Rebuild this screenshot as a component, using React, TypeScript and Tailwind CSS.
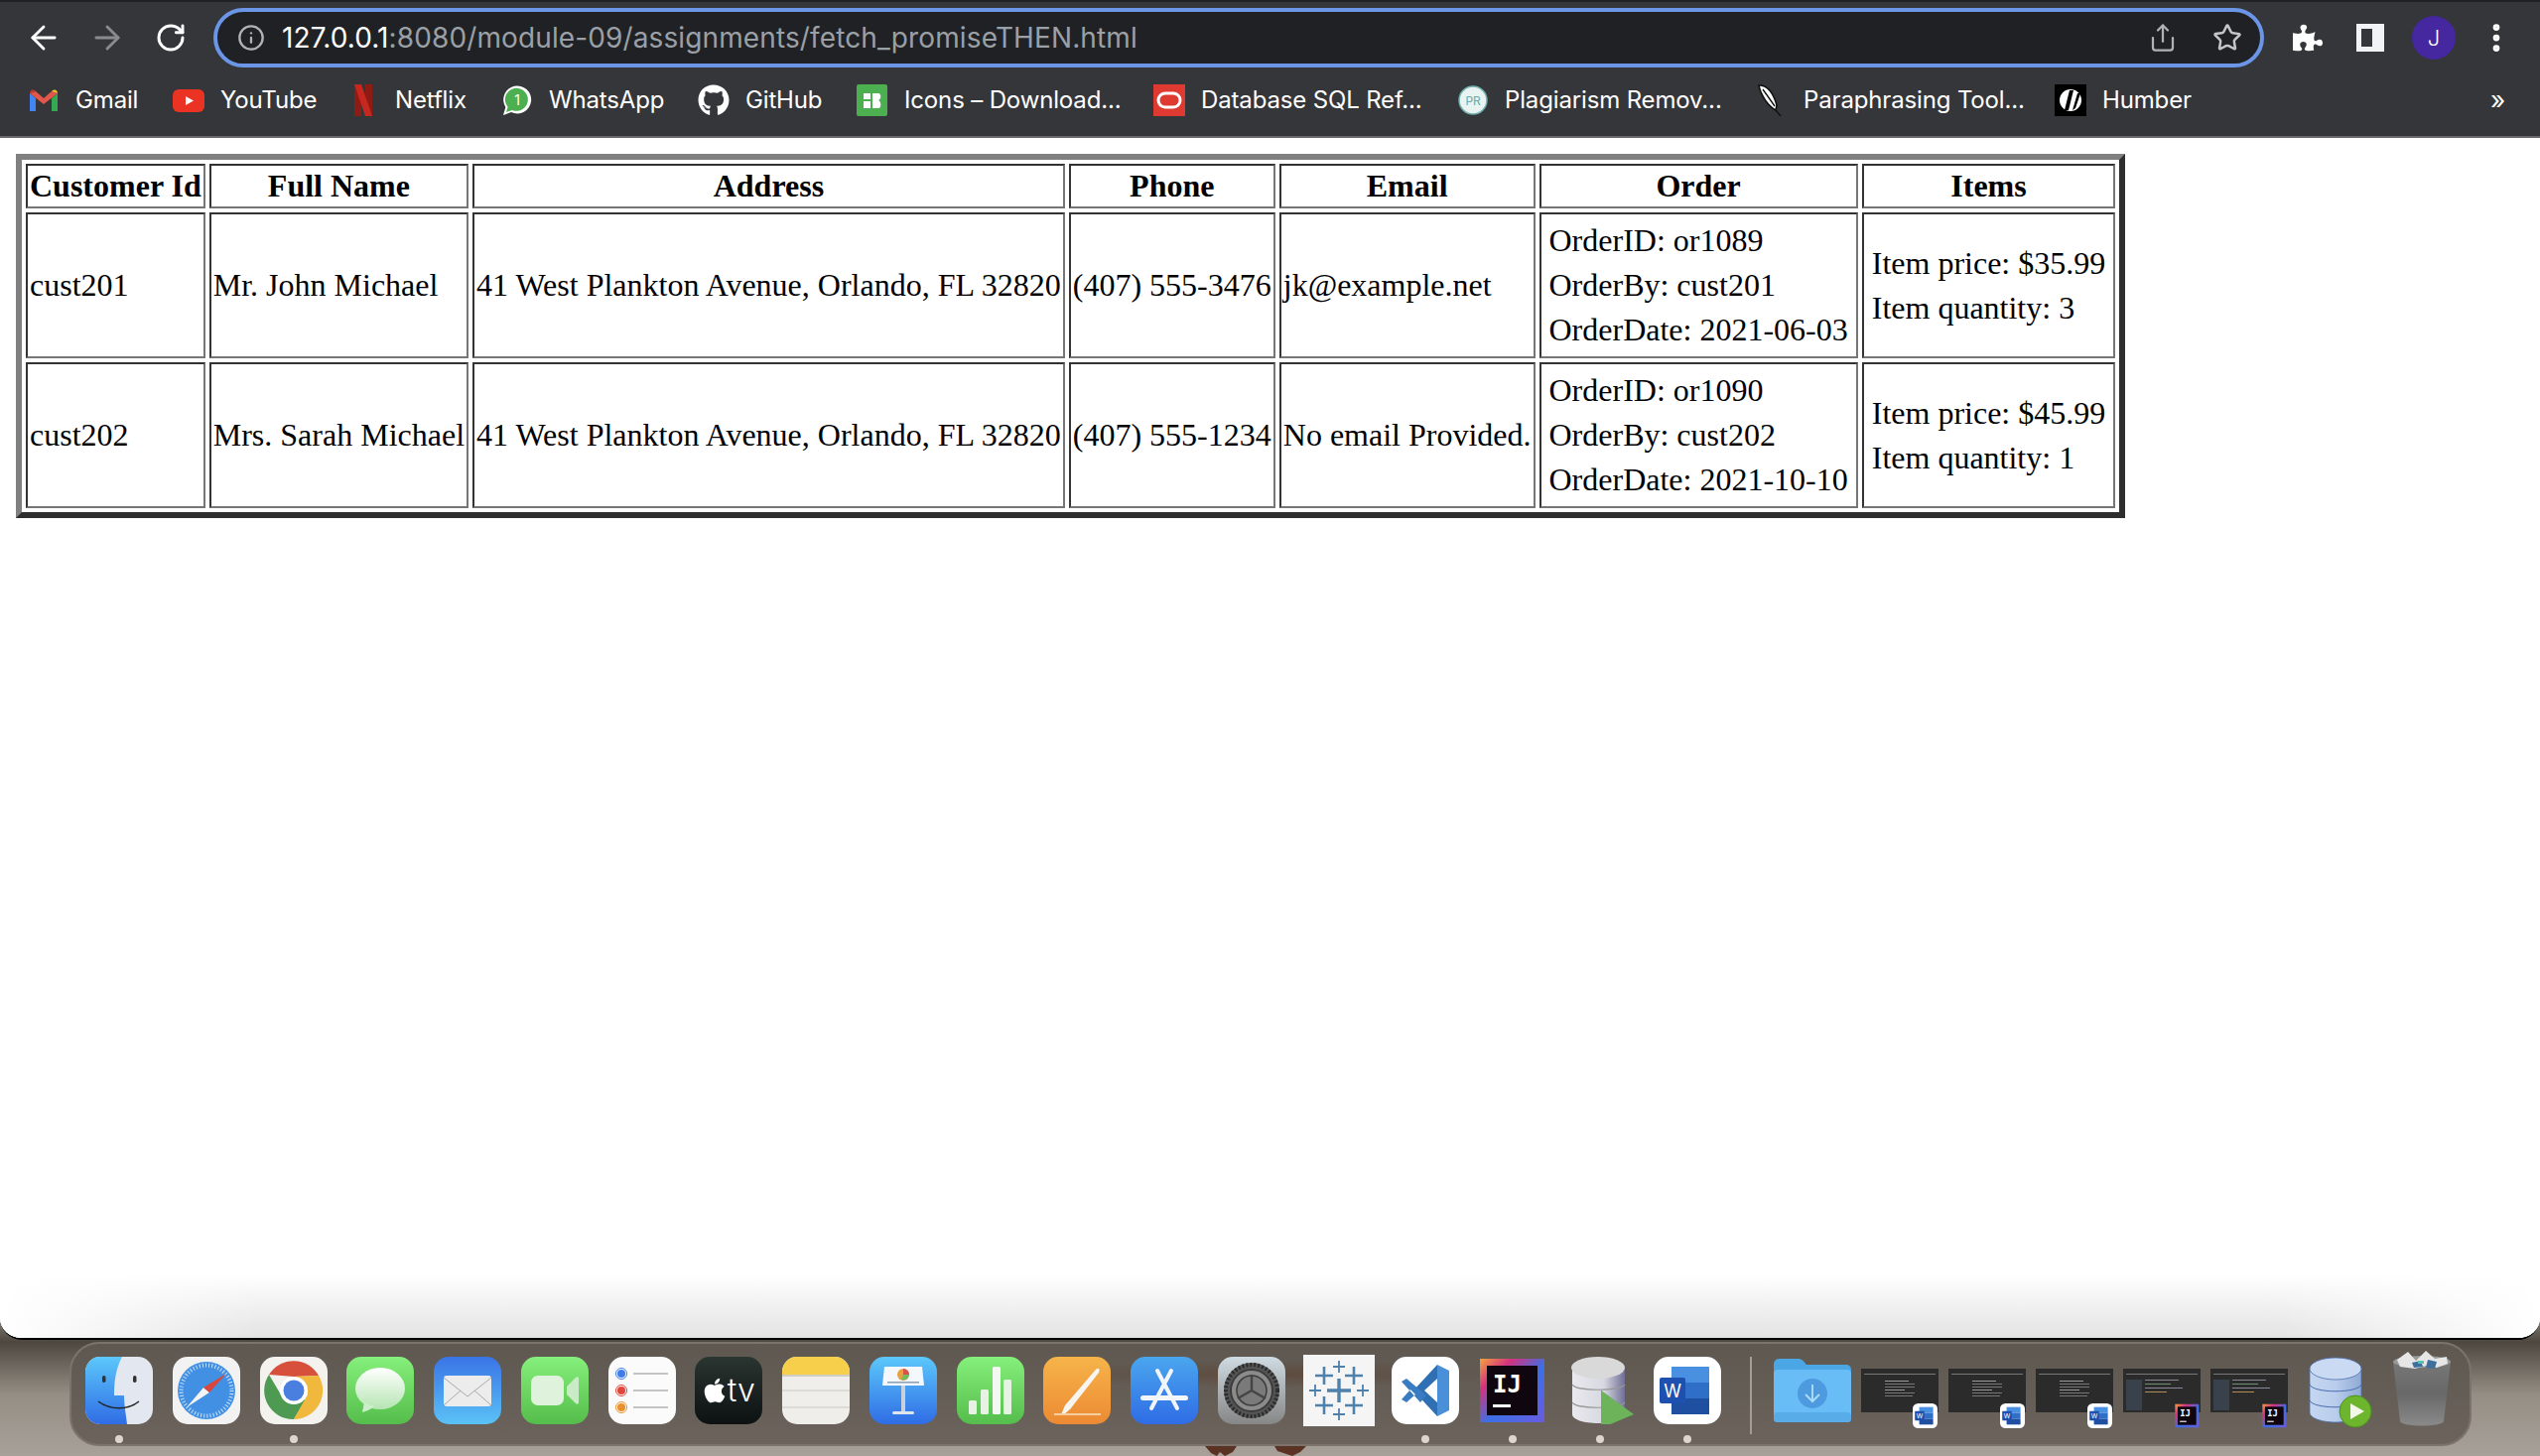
import { ArrowLeft, ArrowRight, Info, MoreVertical, RotateCw, Share, Star } from "lucide-react"
import { FaApple, FaGithub, FaPuzzlePiece } from "react-icons/fa"
import type { ReactNode } from "react"

const rows = [
  {
    id: "cust201",
    name: "Mr. John Michael",
    phone: "(407) 555-3476",
    email: "jk@example.net",
    order: ["OrderID: or1089", "OrderBy: cust201", "OrderDate: 2021-06-03"],
    items: ["Item price: $35.99", "Item quantity: 3"],
  },
  {
    id: "cust202",
    name: "Mrs. Sarah Michael",
    phone: "(407) 555-1234",
    email: "No email Provided.",
    order: ["OrderID: or1090", "OrderBy: cust202", "OrderDate: 2021-10-10"],
    items: ["Item price: $45.99", "Item quantity: 1"],
  },
]

const headers = ["Customer Id", "Full Name", "Address", "Phone", "Email", "Order", "Items"]

const cellBorder =
  "border-2 border-solid border-t-[#333333] border-l-[#333333] border-b-[#767676] border-r-[#767676] p-[2px] whitespace-nowrap"

function Cell({ children }: { children: ReactNode }) {
  return <td className={cellBorder}>{children}</td>
}

function Nested({ lines }: { lines: string[] }) {
  return (
    <table className="border-separate border-spacing-[4px]">
      <tbody>
        {lines.map((l) => (
          <tr key={l}>
            <td className="p-[2px] whitespace-nowrap">{l}</td>
          </tr>
        ))}
      </tbody>
    </table>
  )
}

function Favicon({ children }: { children: ReactNode }) {
  return (
    <svg viewBox="0 0 32 32" className="h-8 w-8 shrink-0">
      {children}
    </svg>
  )
}

const bookmarks: { label: string; width: string; icon: ReactNode }[] = [
  {
    label: "Gmail",
    width: "w-[146px]",
    icon: (
      <Favicon>
        <path d="M2 9v18h6V14z" fill="#4285f4" />
        <path d="M24 14v13h6V9z" fill="#34a853" />
        <path d="M2 9l14 11L30 9l-6-2-8 7-8-7z" fill="#e2574c" />
        <path d="M24 7l6 2c0-3-3-5-6-2z" fill="#f6bc2c" />
        <path d="M8 7L2 9c0-3 3-5 6-2z" fill="#c5382c" />
      </Favicon>
    ),
  },
  {
    label: "YouTube",
    width: "w-[176px]",
    icon: (
      <Favicon>
        <rect x="0" y="5" width="32" height="23" rx="6" fill="#ea3323" />
        <path d="M13 12l8 4.5-8 4.5z" fill="#fff" />
      </Favicon>
    ),
  },
  {
    label: "Netflix",
    width: "w-[155px]",
    icon: (
      <Favicon>
        <path d="M7 0h7v32l-7 .5z" fill="#8f1b15" />
        <path d="M18 0h7v32h-7z" fill="#8f1b15" />
        <path d="M7 0h7l11 32h-7z" fill="#c6281f" />
      </Favicon>
    ),
  },
  {
    label: "WhatsApp",
    width: "w-[198px]",
    icon: (
      <Favicon>
        <path d="M2 31l2.4-8A14 14 0 1 1 10 28z" fill="#fff" />
        <path d="M5 28l1.6-5.2A11.5 11.5 0 1 1 11 26z" fill="#4caf50" />
        <text x="16" y="21" textAnchor="middle" fontSize="14" fill="#fff" fontFamily="Inter, sans-serif">1</text>
      </Favicon>
    ),
  },
  {
    label: "GitHub",
    width: "w-[160px]",
    icon: <FaGithub className="h-8 w-8 shrink-0 text-white" />,
  },
  {
    label: "Icons – Download...",
    width: "w-[299px]",
    icon: (
      <Favicon>
        <rect width="31" height="32" rx="2" fill="#4caf50" />
        <path d="M7 9h7v6H7zM7 17h7v7H7zM16 9h6c3 0 3 6 0 7 3 1 3 8 0 8h-6z" fill="#fff" />
      </Favicon>
    ),
  },
  {
    label: "Database SQL Ref...",
    width: "w-[306px]",
    icon: (
      <Favicon>
        <rect width="32" height="32" fill="#de3a32" />
        <rect x="5" y="9" width="22" height="14" rx="7" fill="none" stroke="#fff" strokeWidth="3" />
      </Favicon>
    ),
  },
  {
    label: "Plagiarism Remov...",
    width: "w-[301px]",
    icon: (
      <Favicon>
        <circle cx="16" cy="16" r="14" fill="#e8f3f2" stroke="#6fb0ac" strokeWidth="1.5" />
        <text x="16" y="21" textAnchor="middle" fontSize="12" fill="#6fa8a4" fontFamily="Inter, sans-serif">PR</text>
      </Favicon>
    ),
  },
  {
    label: "Paraphrasing Tool...",
    width: "w-[301px]",
    icon: (
      <Favicon>
        <path d="M3 1c9-1 15 9 18 20l-1 5C13 22 5 12 3 1z" fill="#fff" stroke="#111" strokeWidth="1.6" />
        <path d="M7 5l12 17M20 26l5 6" stroke="#111" strokeWidth="1.4" />
      </Favicon>
    ),
  },
  {
    label: "Humber",
    width: "w-[120px]",
    icon: (
      <Favicon>
        <rect width="32" height="32" fill="#000" />
        <circle cx="16" cy="16" r="11" fill="#fff" />
        <path d="M10 26L15 6h4l-5 20zM18 26l5-17h3l-5 15z" fill="#000" />
      </Favicon>
    ),
  },
]

function Tile({ children }: { children: ReactNode }) {
  return (
    <svg viewBox="0 0 68 68" className="h-[68px] w-[68px]">
      {children}
    </svg>
  )
}

function Finder() {
  return (
    <Tile>
      <defs>
        <linearGradient id="fb" x1="0" y1="0" x2="0" y2="1">
          <stop offset="0" stopColor="#5cc8fb" />
          <stop offset="1" stopColor="#2f6ce5" />
        </linearGradient>
        <clipPath id="fc">
          <rect width="68" height="68" rx="15" />
        </clipPath>
      </defs>
      <g clipPath="url(#fc)">
        <rect width="68" height="68" fill="#e3e8f0" />
        <path d="M0 0h37c-5 10-8 20-8 39h10c0 10 2 20 3 29H0z" fill="url(#fb)" />
      </g>
      <rect x="17" y="19" width="3.5" height="7" rx="1.7" fill="#333" />
      <rect x="48" y="19" width="3.5" height="7" rx="1.7" fill="#333" />
      <path d="M13 45c12 9 30 9 41 0" fill="none" stroke="#222" strokeWidth="1.4" />
    </Tile>
  )
}

function Safari() {
  return (
    <Tile>
      <rect width="68" height="68" rx="15" fill="#f2f2f2" />
      <circle cx="34" cy="34" r="29" fill="#4190e4" />
      <circle cx="34" cy="34" r="25.5" fill="none" stroke="#cfe2f7" strokeWidth="4" strokeDasharray="1 2.2" />
      <path d="M14 51l17-20 6 5z" fill="#f4f4f4" />
      <path d="M54 17L31 31l6 5z" fill="#d9473a" />
    </Tile>
  )
}

function Chrome() {
  return (
    <Tile>
      <rect width="68" height="68" rx="15" fill="#f4f2ee" />
      <path d="M9 18A29 29 0 0 1 59 19L34 20z" fill="#d6503c" />
      <path d="M9 18a29 29 0 0 0 25 45l12-20-24-3z" fill="#4f9a53" />
      <path d="M59 19a29 29 0 0 1-25 44l14-25-14-18z" fill="#f0b83c" />
      <circle cx="34" cy="34" r="14" fill="#fff" />
      <circle cx="34" cy="34" r="10.5" fill="#4a7fe0" />
    </Tile>
  )
}

function Messages() {
  return (
    <Tile>
      <defs>
        <linearGradient id="gr" x1="0" y1="0" x2="0" y2="1">
          <stop offset="0" stopColor="#86f07c" />
          <stop offset="1" stopColor="#55bd4b" />
        </linearGradient>
        <linearGradient id="bu" x1="0" y1="0" x2="0" y2="1">
          <stop offset="0" stopColor="#ffffff" />
          <stop offset="1" stopColor="#b5e5b2" />
        </linearGradient>
      </defs>
      <rect width="68" height="68" rx="15" fill="url(#gr)" />
      <ellipse cx="34" cy="32" rx="25" ry="21" fill="url(#bu)" />
      <path d="M18 46l-2 10c4-1 9-3 12-6z" fill="#cdeecb" />
    </Tile>
  )
}

function Mail() {
  return (
    <Tile>
      <defs>
        <linearGradient id="ml" x1="0" y1="0" x2="0" y2="1">
          <stop offset="0" stopColor="#3a74e6" />
          <stop offset="1" stopColor="#5ac2f6" />
        </linearGradient>
      </defs>
      <rect width="68" height="68" rx="15" fill="url(#ml)" />
      <rect x="10" y="19" width="48" height="31" rx="3" fill="#ececec" />
      <path d="M10 21l24 19 24-19M10 49l17-15M58 49L41 34" fill="none" stroke="#a9a9a9" strokeWidth="1" />
    </Tile>
  )
}

function FaceTime() {
  return (
    <Tile>
      <rect width="68" height="68" rx="15" fill="url(#gr)" />
      <rect x="10" y="19" width="33" height="30" rx="7" fill="#dff3dc" />
      <path d="M46 30l9-9c1-1 3-1 3 1v24c0 2-2 2-3 1l-9-9z" fill="#c9ebc5" />
    </Tile>
  )
}

function Reminders() {
  return (
    <Tile>
      <rect width="68" height="68" rx="15" fill="#fbfbfb" />
      {[
        ["17", "#3f7ce8"],
        ["34", "#e0463a"],
        ["51", "#e8912c"],
      ].map(([y, c]) => (
        <g key={y}>
          <circle cx="13" cy={y} r="5.5" fill="#fff" stroke={c} strokeWidth="1" />
          <circle cx="13" cy={y} r="4" fill={c} />
          <rect x="25" y={Number(y) - 1} width="35" height="2" fill="#c4c4c4" />
        </g>
      ))}
    </Tile>
  )
}

function AppleTv() {
  return (
    <div className="relative flex h-[68px] w-[68px] items-center justify-center gap-[1px] rounded-[15px] bg-gradient-to-b from-[#2a3531] to-[#0d1112] font-['Inter',sans-serif] text-white">
      <FaApple className="h-[28px] w-[24px]" />
      <span className="text-[32px] font-light leading-none">tv</span>
    </div>
  )
}

function Notes() {
  return (
    <Tile>
      <defs>
        <clipPath id="nc">
          <rect width="68" height="68" rx="15" />
        </clipPath>
      </defs>
      <g clipPath="url(#nc)">
        <rect width="68" height="68" fill="#efeeea" />
        <rect width="68" height="18" fill="#f8cf4a" />
        <rect y="18" width="68" height="2" fill="#cfcdc6" />
        <rect y="33" width="68" height="2" fill="#dcdbd6" />
        <rect y="50" width="68" height="2" fill="#dcdbd6" />
      </g>
    </Tile>
  )
}

function Keynote() {
  return (
    <Tile>
      <defs>
        <linearGradient id="kn" x1="0" y1="0" x2="0" y2="1">
          <stop offset="0" stopColor="#5cc8fb" />
          <stop offset="1" stopColor="#2f6ce5" />
        </linearGradient>
      </defs>
      <rect width="68" height="68" rx="15" fill="url(#kn)" />
      <path d="M15 10h38l2 19H13z" fill="#f4f7fb" />
      <rect x="18" y="25" width="32" height="1.6" fill="#8fa3b8" />
      <circle cx="34" cy="18" r="6" fill="#e8a13c" />
      <path d="M34 18v-6a6 6 0 0 1 6 6z" fill="#d9534a" />
      <path d="M34 18h6a6 6 0 0 1-8 5z" fill="#71bb62" />
      <rect x="32" y="29" width="4" height="27" fill="#c9d2dc" />
      <rect x="23" y="55" width="22" height="3" rx="1.5" fill="#dfe5ec" />
    </Tile>
  )
}

function Numbers() {
  return (
    <Tile>
      <rect width="68" height="68" rx="15" fill="url(#gr)" />
      <rect x="12" y="44" width="8" height="14" rx="1.5" fill="#e6f3e4" />
      <rect x="24" y="33" width="8" height="25" rx="1.5" fill="#e6f3e4" />
      <rect x="36" y="10" width="8" height="48" rx="1.5" fill="#f3f8f2" />
      <rect x="47" y="23" width="8" height="35" rx="1.5" fill="#e6f3e4" />
    </Tile>
  )
}

function Pages() {
  return (
    <Tile>
      <defs>
        <linearGradient id="pg" x1="0" y1="0" x2="0" y2="1">
          <stop offset="0" stopColor="#f6b44a" />
          <stop offset="1" stopColor="#ec8a33" />
        </linearGradient>
      </defs>
      <rect width="68" height="68" rx="15" fill="url(#pg)" />
      <path d="M52 14c3-4 6-2 4 2L27 53l-6 5c-2 1-3 0-2-2l3-7z" fill="#f7f5f0" />
      <rect x="11" y="57" width="47" height="2" fill="#f6cfa0" />
    </Tile>
  )
}

function AppStore() {
  return (
    <Tile>
      <defs>
        <linearGradient id="as" x1="0" y1="0" x2="0" y2="1">
          <stop offset="0" stopColor="#4aa6ee" />
          <stop offset="1" stopColor="#2f6ce5" />
        </linearGradient>
      </defs>
      <rect width="68" height="68" rx="15" fill="url(#as)" />
      <path d="M27 14l20 38M41 14L21 52" stroke="#f2f6fb" strokeWidth="4" strokeLinecap="round" />
      <rect x="10" y="39" width="48" height="5" rx="2.5" fill="#f2f6fb" />
    </Tile>
  )
}

function SystemPrefs() {
  return (
    <Tile>
      <defs>
        <linearGradient id="sp" x1="0" y1="0" x2="0" y2="1">
          <stop offset="0" stopColor="#cfdbe2" />
          <stop offset="1" stopColor="#868686" />
        </linearGradient>
      </defs>
      <rect width="68" height="68" rx="15" fill="url(#sp)" />
      <circle cx="34" cy="34" r="28" fill="#555" />
      <circle cx="34" cy="34" r="26" fill="none" stroke="#2b2b2b" strokeWidth="4" strokeDasharray="2 2" />
      <circle cx="34" cy="34" r="21" fill="#8b8b8b" stroke="#3c3c3c" strokeWidth="2" />
      <circle cx="34" cy="34" r="15" fill="#7a7a7a" stroke="#3c3c3c" strokeWidth="1.5" />
      <path d="M34 34V18M34 34l14 8M34 34l-14 8" stroke="#444" strokeWidth="2.4" />
    </Tile>
  )
}

function Tableau() {
  const cross = (x: number, y: number, r: number, w: number, k: string) => (
    <path key={k} d={`M${x - r} ${y}h${r * 2}M${x} ${y - r}v${r * 2}`} stroke="#4f81ad" strokeWidth={w} />
  )
  return (
    <svg viewBox="0 0 72 72" className="-mt-[2px] -ml-[2px] h-[72px] w-[72px]">
      <rect width="72" height="72" fill="#f5f5f5" />
      {cross(36, 36, 12, 3.4, "c")}
      {cross(36, 12, 6, 1.8, "t")}
      {cross(36, 60, 6, 1.8, "b")}
      {cross(12, 36, 6, 1.8, "l")}
      {cross(60, 36, 6, 1.8, "r")}
      {cross(21, 21, 9, 2.6, "a")}
      {cross(51, 21, 9, 2.6, "d")}
      {cross(21, 51, 9, 2.6, "e")}
      {cross(51, 51, 9, 2.6, "f")}
    </svg>
  )
}

function VsCode() {
  return (
    <Tile>
      <rect width="68" height="68" rx="15" fill="#fff" />
      <path d="M46 8l12 6v40l-12 6z" fill="#4a90d9" />
      <path d="M46 8L22 34l24 26V46L33 34l13-12z" fill="#2f6fb3" />
      <path d="M10 25l5-3 20 17-6 7zM10 43l5 3 9-8-5-5z" fill="#3a7cc2" />
    </Tile>
  )
}

function Intellij({ small }: { small?: boolean }) {
  return (
    <svg viewBox="0 0 68 68" className={small ? "h-[25px] w-[25px]" : "h-[68px] w-[68px]"}>
      <defs>
        <linearGradient id="ij" x1="0" y1="0" x2="1" y2="1">
          <stop offset="0" stopColor="#f6a33a" />
          <stop offset="0.25" stopColor="#d4327f" />
          <stop offset="0.55" stopColor="#3c6fe6" />
          <stop offset="1" stopColor="#6a5be0" />
        </linearGradient>
      </defs>
      <rect x="1" y="2" width="65" height="64" fill="url(#ij)" />
      <rect x="8" y="9" width="51" height="50" fill="#10060f" />
      <text x="14" y="36" fontSize="24" fontWeight="700" fill="#fff" fontFamily="'DejaVu Sans Mono', monospace">IJ</text>
      <rect x="14" y="48" width="18" height="3" fill="#fff" />
    </svg>
  )
}

function DbArrow() {
  return (
    <Tile>
      <defs>
        <linearGradient id="dbg" x1="0" y1="0" x2="1" y2="0">
          <stop offset="0" stopColor="#e9e9ee" />
          <stop offset="0.6" stopColor="#d8d8e2" />
          <stop offset="1" stopColor="#6f6f96" />
        </linearGradient>
      </defs>
      <path d="M6 10v48c0 5 11 9 26 9s27-4 27-9V10z" fill="url(#dbg)" />
      <ellipse cx="32" cy="11" rx="27" ry="11" fill="#d9d9d9" />
      <path d="M6 28c4 7 48 7 53 0M6 46c4 7 48 7 53 0" fill="none" stroke="#999" strokeWidth="1.2" />
      <path d="M35 34l33 25-33 9z" fill="#3b8a3c" />
      <path d="M35 34l33 24-33 14z" fill="#6db35a" />
    </Tile>
  )
}

function Word({ small }: { small?: boolean }) {
  return (
    <svg viewBox="0 0 68 68" className={small ? "h-[25px] w-[25px]" : "h-[68px] w-[68px]"}>
      <rect width="68" height="68" rx="15" fill="#fff" />
      <rect x="18" y="10" width="38" height="16" fill="#4a90e0" />
      <rect x="18" y="26" width="38" height="16" fill="#2f6fc8" />
      <rect x="18" y="42" width="38" height="16" fill="#1f4fa0" />
      <rect x="6" y="21" width="26" height="26" rx="2" fill="#1d50b0" />
      <text x="19" y="41" textAnchor="middle" fontSize="18" fill="#fff" fontFamily="Inter, sans-serif">W</text>
    </svg>
  )
}

function Folder() {
  return (
    <svg viewBox="0 0 78 68" className="h-[68px] w-[78px]">
      <path d="M0 8c0-3 2-6 5-6h20c3 0 5 2 8 6h40c3 0 5 2 5 5v48c0 3-2 5-5 5H5c-3 0-5-2-5-5z" fill="#4ba6e6" />
      <rect y="13" width="78" height="53" rx="4" fill="#69bdf6" />
      <rect y="56" width="78" height="10" rx="4" fill="#58ace8" />
      <ellipse cx="39" cy="37" rx="15" ry="15" fill="#4e9ade" />
      <path d="M39 28v17M32 38l7 7 7-7" fill="none" stroke="#a9d8f8" strokeWidth="2" />
    </svg>
  )
}

function Thumb({ badge, ide }: { badge: ReactNode; ide?: boolean }) {
  return (
    <div className="relative h-[68px] w-[78px]">
      <div className="mt-[12px] flex h-[44px] w-[78px] flex-col items-center gap-[2px] bg-[#2b2b2b] pt-[5px]">
        <div className="h-[1px] w-[72px] bg-[#777]" />
        {ide ? (
          <div className="mt-[3px] flex w-[72px] flex-1 gap-[3px] pb-[2px]">
            <div className="h-full w-[16px] bg-[#39424c]" />
            <div className="flex flex-1 flex-col gap-[3px]">
              <div className="h-[1px] w-[34px] bg-[#889]" />
              <div className="h-[1px] w-[26px] bg-[#6b8f71]" />
              <div className="h-[1px] w-[38px] bg-[#889]" />
              <div className="h-[1px] w-[22px] bg-[#b08d57]" />
            </div>
          </div>
        ) : (
          <div className="mt-[4px] flex flex-col gap-[2px]">
            <div className="h-[1px] w-[24px] bg-[#999]" />
            <div className="h-[1px] w-[30px] bg-[#777]" />
            <div className="h-[1px] w-[30px] bg-[#777]" />
            <div className="h-[1px] w-[20px] bg-[#999]" />
            <div className="h-[1px] w-[30px] bg-[#777]" />
            <div className="h-[1px] w-[28px] bg-[#777]" />
          </div>
        )}
      </div>
      <div className="absolute right-[1px] bottom-[-4px]">{badge}</div>
    </div>
  )
}

function DbGreen() {
  return (
    <svg viewBox="0 0 64 72" className="h-[72px] w-[64px]">
      <defs>
        <linearGradient id="dbb" x1="0" y1="0" x2="1" y2="0">
          <stop offset="0" stopColor="#c5d6f0" />
          <stop offset="0.5" stopColor="#b9cdec" />
          <stop offset="1" stopColor="#8fa9d4" />
        </linearGradient>
      </defs>
      <path d="M1 12v44c0 6 12 10 26 10s26-4 26-10V12z" fill="url(#dbb)" stroke="#4a6fb0" strokeWidth="0.8" />
      <ellipse cx="27" cy="12" rx="26" ry="11" fill="#cbdaf3" stroke="#4a6fb0" strokeWidth="0.8" />
      <path d="M1 28c3 9 49 9 52 0M1 44c3 9 49 9 52 0" fill="none" stroke="#4a6fb0" strokeWidth="1" />
      <circle cx="47" cy="55" r="16" fill="#6cb52d" stroke="#4f9222" strokeWidth="1" />
      <path d="M42 47l14 8-14 8z" fill="#f2f7e8" />
    </svg>
  )
}

function Trash() {
  return (
    <svg viewBox="0 0 60 78" className="-mt-[7px] h-[78px] w-[60px]">
      <defs>
        <linearGradient id="tr" x1="0" y1="0" x2="0" y2="1">
          <stop offset="0" stopColor="#777" />
          <stop offset="0.5" stopColor="#686868" />
          <stop offset="1" stopColor="#8a8a8a" />
        </linearGradient>
      </defs>
      <path d="M1 12h58l-7 60c-1 6-43 6-44 0z" fill="url(#tr)" />
      <ellipse cx="30" cy="12" rx="29" ry="6" fill="#999" />
      <path d="M5 10l11-8 8 9 10-10 9 8 12-2 1 7-11 4-11-2-11 3-15-2z" fill="#e6e6e6" />
      <path d="M20 13l9-2 2 6-9 1zM36 10l9 2-2 7-9-1z" fill="#3f6f9c" />
      <path d="M26 11h6v3h-6z" fill="#5ac2b0" />
    </svg>
  )
}

function Dot() {
  return <span className="absolute bottom-[-19px] left-[30px] h-[8px] w-[8px] rounded-full bg-[#ddd6cf]" />
}

const dockApps: { key: string; node: ReactNode; running?: boolean }[] = [
  { key: "finder", node: <Finder />, running: true },
  { key: "safari", node: <Safari /> },
  { key: "chrome", node: <Chrome />, running: true },
  { key: "messages", node: <Messages /> },
  { key: "mail", node: <Mail /> },
  { key: "facetime", node: <FaceTime /> },
  { key: "reminders", node: <Reminders /> },
  { key: "tv", node: <AppleTv /> },
  { key: "notes", node: <Notes /> },
  { key: "keynote", node: <Keynote /> },
  { key: "numbers", node: <Numbers /> },
  { key: "pages", node: <Pages /> },
  { key: "appstore", node: <AppStore /> },
  { key: "prefs", node: <SystemPrefs /> },
  { key: "tableau", node: <Tableau /> },
  { key: "vscode", node: <VsCode />, running: true },
  { key: "intellij", node: <Intellij />, running: true },
  { key: "dbarrow", node: <DbArrow />, running: true },
  { key: "word", node: <Word />, running: true },
]

export default function App() {
  return (
    <div className="relative flex h-[1467px] w-[2559px] flex-col overflow-hidden bg-[linear-gradient(180deg,#8f887e_0,#8f887e_1325px,#4e473f_1352px,#958e85_1405px,#a8a199_1467px)]">
      {/* browser window */}
      <div className="flex h-[1350px] flex-col overflow-hidden rounded-b-[22px] border-b-2 border-black bg-white">
        <header className="h-[139px] shrink-0 border-t-2 border-b-2 border-t-[#202124] border-b-[#68686a] bg-[#35363a] font-['Inter',sans-serif]">
          <div className="flex h-[70px] items-center pt-[2px]">
            <div className="flex w-[215px] items-center pl-[25px] text-white">
              <ArrowLeft className="h-[38px] w-[38px]" strokeWidth={1.8} />
              <ArrowRight className="ml-[26px] h-[38px] w-[38px] text-[#8a8b8d]" strokeWidth={1.8} />
              <RotateCw className="ml-[29px] h-[32px] w-[32px]" strokeWidth={2.2} />
            </div>
            <div className="flex h-[60px] w-[2066px] items-center rounded-full border-4 border-[#6b96e8] bg-[#202124] pr-[18px] pl-[20px]">
              <Info className="h-[28px] w-[28px] text-[#b0b2b5]" strokeWidth={2} />
              <div className="ml-[17px] flex-1 whitespace-nowrap text-[28px] tracking-[0.12px] text-[#9aa0a6]">
                <span className="text-white">127.0.0.1</span>:8080/module-09/assignments/fetch_promiseTHEN.html
              </div>
              <Share className="h-[30px] w-[30px] text-[#b0b2b5]" strokeWidth={1.8} />
              <Star className="ml-[35px] h-[30px] w-[30px] text-[#c4c6c9]" strokeWidth={2} />
            </div>
            <div className="flex flex-1 items-center pl-[29px] text-white">
              <FaPuzzlePiece className="h-[30px] w-[30px]" />
              <div className="ml-[34px] h-[28px] w-[28px] border-[5px] border-r-[12px] border-[#f1f3f4]" />
              <div className="ml-[28px] flex h-[44px] w-[44px] items-center justify-center rounded-full bg-[#4527a0] text-[22px] font-light">
                J
              </div>
              <MoreVertical className="ml-[23px] h-[36px] w-[36px]" strokeWidth={2.5} />
            </div>
          </div>
          <div className="flex h-[63px] items-center pb-[6px] pl-[28px] text-[24px] tracking-[-0.15px] text-white">
            {bookmarks.map((b) => (
              <div key={b.label} className={`flex shrink-0 items-center gap-[16px] whitespace-nowrap ${b.width}`}>
                {b.icon}
                <span>{b.label}</span>
              </div>
            ))}
            <span className="ml-[319px] text-[26px]">»</span>
          </div>
        </header>

        <main className="flex-1 p-[16px] font-['Liberation_Serif','Times_New_Roman',serif] text-[32px] leading-[normal] text-black">
          <table className="border-separate border-spacing-[4px] border-[6px] border-solid border-t-[#808080] border-l-[#808080] border-b-[#2e2e2e] border-r-[#2e2e2e]">
            <thead>
              <tr>
                {headers.map((h) => (
                  <th key={h} className={`${cellBorder} font-bold`}>
                    {h}
                  </th>
                ))}
              </tr>
            </thead>
            <tbody>
              {rows.map((r) => (
                <tr key={r.id}>
                  <Cell>{r.id}</Cell>
                  <Cell>{r.name}</Cell>
                  <Cell>41 West Plankton Avenue, Orlando, FL 32820</Cell>
                  <Cell>{r.phone}</Cell>
                  <Cell>{r.email}</Cell>
                  <Cell>
                    <Nested lines={r.order} />
                  </Cell>
                  <Cell>
                    <Nested lines={r.items} />
                  </Cell>
                </tr>
              ))}
            </tbody>
          </table>
        </main>

        <div className="relative h-[64px] shrink-0 bg-gradient-to-b from-white to-[#e3e3e3]">
          <div className="absolute inset-y-0 left-0 w-[260px] bg-gradient-to-r from-white to-transparent" />
          <div className="absolute inset-y-0 right-0 w-[260px] bg-gradient-to-l from-white to-transparent" />
        </div>
      </div>

      {/* dock */}
      <div className="mt-[2px] ml-[70px] flex h-[105px] w-[2420px] items-start gap-[19.75px] rounded-[30px] border-2 border-[#7b746d] bg-[radial-gradient(ellipse_at_50%_30%,rgba(90,58,38,0.5),transparent_14%),linear-gradient(180deg,#5e5851,#6b635c)] pt-[13px] pl-[14px]">
        {dockApps.map((a) => (
          <div key={a.key} className="relative h-[68px] w-[68px] shrink-0">
            {a.node}
            {a.running && <Dot />}
          </div>
        ))}
        <div className="ml-[10px] h-[78px] w-[2px] shrink-0 bg-[#a39d97]" />
        <div className="ml-[2px] flex items-start gap-[10px]">
          <Folder />
          <Thumb badge={<Word small />} />
          <Thumb badge={<Word small />} />
          <Thumb badge={<Word small />} />
          <Thumb ide badge={<Intellij small />} />
          <Thumb ide badge={<Intellij small />} />
        </div>
        <div className="ml-[1px] flex items-start gap-[20px]">
          <DbGreen />
          <Trash />
        </div>
      </div>

      {/* bit of wallpaper showing under the dock */}
      <svg viewBox="0 0 110 10" className="absolute bottom-0 left-[1210px] h-[10px] w-[110px]">
        <path d="M4 0h32l-4 6-8 4-5-4-3 4-6-3zM74 0h32l-6 6-8 4-9-3-6-2z" fill="#5a3325" />
      </svg>
    </div>
  )
}
